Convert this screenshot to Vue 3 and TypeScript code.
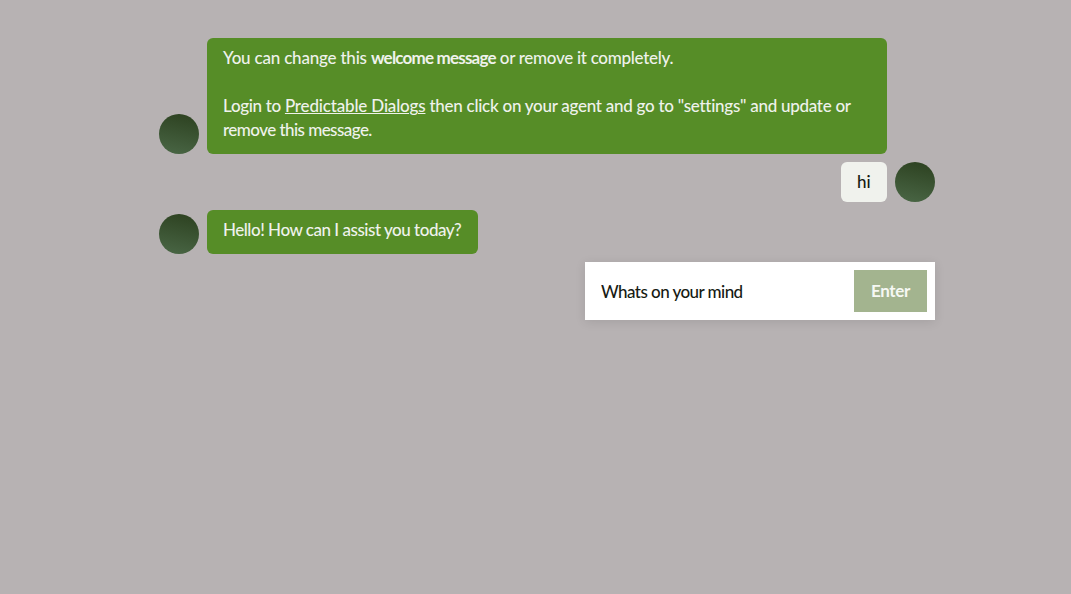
<script setup lang="ts">
import { ref } from 'vue'

const draft = ref('Whats on your mind')
</script>

<template>
  <main class="chat">
    <section class="row">
      <div class="avatar"></div>
      <div class="bubble host welcome">
        <p><span class="intro">You can change this </span><strong>welcome message</strong><span class="intro-end"> or remove it completely.</span></p>
        <p class="blank"></p>
        <p><span class="login">Login to </span><a>Predictable Dialogs</a><span class="steps"> then click on your agent and go to "settings" and update or</span></p>
        <p class="steps-end">remove this message.</p>
      </div>
    </section>
    <section class="row guest-row">
      <div class="bubble guest">hi</div>
      <div class="avatar"></div>
    </section>
    <section class="row">
      <div class="avatar"></div>
      <div class="bubble host reply"><p>Hello! How can I assist you today?</p></div>
    </section>
    <form class="composer" @submit.prevent>
      <input v-model="draft" class="field" type="text" />
      <button class="send" type="submit">Enter</button>
    </form>
  </main>
</template>

<style>
html,
body {
  background: #b7b2b3;
}
</style>

<style scoped>
.chat {
  box-sizing: border-box;
  width: 776px;
  height: 594px;
  margin-left: 159px;
  padding-top: 38px;
  display: flex;
  flex-direction: column;
  gap: 8px;
  font-family: Lato, "Open Sans", sans-serif;
  font-size: 17px;
  font-weight: 500;
  line-height: 24px;
}
.row {
  display: flex;
  align-items: flex-end;
  gap: 8px;
}
.guest-row {
  justify-content: flex-end;
}
.avatar {
  width: 40px;
  height: 40px;
  flex: none;
  border-radius: 50%;
  background: linear-gradient(12deg, #4a6746, #2e4322 92%);
}
.bubble {
  box-sizing: border-box;
  border-radius: 6px;
  padding: 8px 16px;
  white-space: nowrap;
}
.host {
  background: #568d27;
  color: #eff2ec;
  padding-bottom: 12px;
}
.welcome {
  width: 680px;
  height: 116px;
}
.reply {
  width: 271px;
  height: 44px;
  letter-spacing: -0.48px;
}
.guest {
  width: 46px;
  height: 40px;
  background: #f0f2ed;
  color: #171b14;
}
p {
  margin: 0;
  height: 24px;
  white-space: pre;
}
.intro {
  letter-spacing: -0.2px;
}
strong {
  font-weight: 700;
  letter-spacing: -0.8px;
}
.intro-end {
  letter-spacing: -0.29px;
}
.login {
  letter-spacing: -0.31px;
}
.steps {
  letter-spacing: -0.27px;
}
.steps-end {
  letter-spacing: -0.55px;
}
a {
  letter-spacing: -0.17px;
  text-decoration: underline;
  text-decoration-thickness: 1px;
  text-underline-offset: 1px;
}
.composer {
  box-sizing: border-box;
  align-self: flex-end;
  display: flex;
  align-items: center;
  width: 350px;
  height: 58px;
  padding: 8px 8px 8px 16px;
  background: #fff;
  box-shadow: 0 2px 10px rgba(0, 0, 0, 0.1);
}
.field {
  flex: 1;
  min-width: 0;
  height: 42px;
  padding: 0;
  border: 0;
  outline: 0;
  background: transparent;
  color: #171b14;
  font: inherit;
  letter-spacing: -0.55px;
}
.send {
  width: 73px;
  height: 42px;
  padding: 0 0 1px;
  border: 0;
  background: #a3b48f;
  color: #f6f8f4;
  font: inherit;
  font-weight: 700;
  letter-spacing: -0.3px;
}
</style>
